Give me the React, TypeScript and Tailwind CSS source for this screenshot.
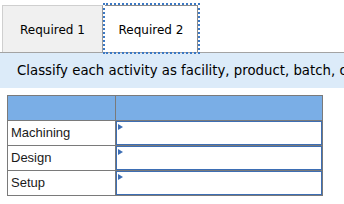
const ROWS = ['Machining', 'Design', 'Setup'];

function AnswerRow({ label }: { label: string }) {
  return (
    <div className="flex h-[25px] border-t border-[#7a7a7a]">
      <div className="w-[108px] border-r border-[#7a7a7a] flex items-center pl-[3px] text-[13px] text-[#1a1a1a] font-['Liberation_Sans',Arial,sans-serif]">
        {label}
      </div>
      <div className="flex-1 relative bg-white border border-[#3d6eb4]">
        <div className="absolute top-[2px] left-[1px] w-0 h-0 border-l-[5px] border-l-[#3d6eb4] border-y-[3px] border-y-transparent" />
      </div>
    </div>
  );
}

export default function App() {
  return (
    <div className="w-[344px] h-[204px] bg-white overflow-hidden font-['DejaVu_Sans',Verdana,sans-serif] text-black">
      <div className="flex items-end pl-[2px] pt-[5px] border-b border-[#a3a3a3]">
        <div className="w-[101px] h-[47px] pt-[2px] bg-[#f0f0f0] border-t border-l border-[#cfcfcf] border-r border-r-[#9a9a9a] flex items-center justify-center text-[12px]">
          Required 1
        </div>
        <div className="ml-[2px] w-[93px] h-[47px] pt-[2px] bg-white border-t border-r border-[#8c8c8c] outline-2 outline-dotted outline-[#3b78c4] flex items-center justify-center text-[12px]">
          Required 2
        </div>
      </div>
      <div className="h-[35px] bg-[#dcebf9] flex items-center pl-[17px] whitespace-nowrap text-[13.3px]">
        Classify each activity as facility, product, batch, or unit level.
      </div>
      <div className="ml-[7px] mt-[7px] w-[316px] border border-[#7a7a7a] border-t-0">
        <div className="flex h-[25px] border-t border-[#7a7a7a] bg-[#7aaee6]">
          <div className="w-[108px] border-r border-[#7a7a7a]" />
          <div className="flex-1" />
        </div>
        {ROWS.map((r) => (
          <AnswerRow key={r} label={r} />
        ))}
      </div>
    </div>
  );
}
